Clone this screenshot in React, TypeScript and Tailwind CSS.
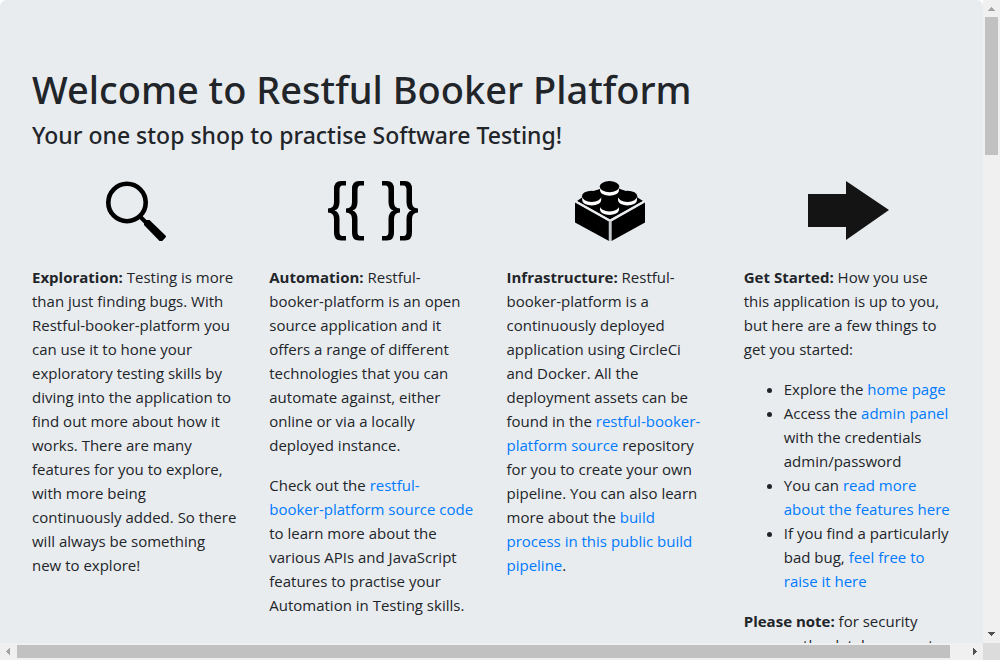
import type { ReactNode } from "react";

function MagnifierIcon() {
  return (
    <svg viewBox="0 0 60 60" className="h-[60px] w-[60px]" role="img" aria-label="Magnifying glass">
      <circle cx="21" cy="21.500" r="18.700" fill="none" stroke="#000" strokeWidth="4.600" />
      <path d="M33 34.500l7 7" stroke="#000" strokeWidth="4" fill="none" />
      <path d="M38 44V41.500L41 39H43.500L59.500 54.500Q60.500 55.500 59.500 56.500L56 60.300Q54.500 61 53.500 60Z" fill="#000" />
    </svg>
  );
}

const leftBrace =
  "M18 0H13Q6 0 6 8V21Q6 27.500 0 27.500V31.500Q6 31.500 6 38V52Q6 59.500 13 59.500H18V55H14.500Q11.500 55 11.500 51V38Q11.500 31 6.500 29.500Q11.500 28 11.500 21V9Q11.500 4.500 14.500 4.500H18Z";

function BracesIcon() {
  return (
    <svg viewBox="0 0 90 60" className="h-[60px] w-[90px]" role="img" aria-label="Double curly braces">
      <path d={leftBrace} />
      <path d={leftBrace} transform="translate(18 0)" />
      <path d={leftBrace} transform="translate(72 0) scale(-1 1)" />
      <path d={leftBrace} transform="translate(90 0) scale(-1 1)" />
    </svg>
  );
}

function Stud({ x, y }: { x: number; y: number }) {
  return (
    <g transform={`translate(${x} ${y})`}>
      <path d="M-9.500 0V3.500C-9.500 11 9.500 11 9.500 3.500V0Z" fill="#fff" />
      <ellipse cx="0" cy="0" rx="9.800" ry="5.600" />
    </g>
  );
}

function BrickIcon() {
  return (
    <svg viewBox="0 0 70 60" className="h-[60px] w-[70px]" role="img" aria-label="Building brick">
      <path d="M35 2L45 8L54 11L68 20L35 38.500L2 20L15 11L25 8Z" />
      <path d="M0 21.500L34 40.500V60L0 41.500Z" />
      <path d="M70 21.500L36.500 40.500V60L70 41.500Z" />
      <path d="M1 20.500L35 39.500L69 20.500" fill="none" stroke="#e9ecef" strokeWidth="2" />
      <path d="M35 39.500V60" stroke="#c6c9cc" strokeWidth="2.500" />
      <Stud x={34.500} y={5.600} />
      <Stud x={16.700} y={15.300} />
      <Stud x={52.500} y={15.300} />
      <Stud x={34.500} y={24.800} />
    </svg>
  );
}

function ArrowIcon() {
  return (
    <svg viewBox="-2 0 83 60" className="h-[60px] w-[83px]" role="img" aria-label="Arrow pointing right">
      <path d="M0 13H38V0L81 29L38 59V46H0Z" fill="#141414" />
    </svg>
  );
}

function Link({ children }: { children: ReactNode }) {
  return (
    <a href="#" className="text-[#007bff] hover:underline">
      {children}
    </a>
  );
}

function Column({ icon, children }: { icon: ReactNode; children: ReactNode }) {
  return (
    <section className="flex flex-col gap-4 px-[15px]">
      <div className="mb-2 flex h-[60px] justify-center">{icon}</div>
      {children}
    </section>
  );
}

function Caret({ points, color }: { points: string; color: string }) {
  return (
    <svg viewBox="0 0 17 17" className="h-[17px] w-[17px] shrink-0" shapeRendering="crispEdges">
      <polygon points={points} fill={color} />
    </svg>
  );
}

export default function App() {
  return (
    <div className="grid h-screen grid-cols-[minmax(0,1fr)_17px] grid-rows-[minmax(0,1fr)_17px] bg-white font-['Open_Sans','Noto_Sans',sans-serif] text-[15px] leading-6 text-[#212529]">
      <main className="overflow-hidden">
        <div className="rounded-md bg-[#e9ecef] px-8 py-16">
          <h1 className="mb-2 font-['Noto_Sans',sans-serif] text-[38px] leading-[50px] font-medium">
            Welcome to Restful Booker Platform
          </h1>
          <h2 className="mb-8 font-['Noto_Sans',sans-serif] text-[23px] leading-[27px] font-medium">
            Your one stop shop to practise Software Testing!
          </h2>
          <div className="-mx-[15px] grid grid-cols-4">
            <Column icon={<MagnifierIcon />}>
              <p>
                <strong>Exploration:</strong> Testing is more than just finding bugs. With Restful-booker-platform you can
                use it to hone your exploratory testing skills by diving into the application to find out more about how it
                works. There are many features for you to explore, with more being continuously added. So there will always
                be something
                <br /> new to explore!
              </p>
            </Column>
            <Column icon={<BracesIcon />}>
              <p>
                <strong>Automation:</strong> Restful-
                <br />
                booker-platform is an open source application and it offers a range of different technologies that you can
                automate against, either online or via a locally deployed instance.
              </p>
              <p>
                Check out the{" "}
                <Link>
                  restful-
                  <br />
                  booker-platform source code
                </Link>{" "}
                to learn more about the various APIs and JavaScript features to practise your Automation in Testing skills.
              </p>
            </Column>
            <Column icon={<BrickIcon />}>
              <p>
                <strong>Infrastructure:</strong> Restful-booker-platform is a continuously deployed application using
                CircleCi
                <br /> and Docker. All the deployment assets can be found in the{" "}
                <Link>restful-booker-platform source</Link> repository for you to create your own pipeline. You can also
                learn more about the{" "}
                <Link>
                  build
                  <br /> process in this public build pipeline
                </Link>
                .
              </p>
            </Column>
            <Column icon={<ArrowIcon />}>
              <p>
                <strong>Get Started:</strong> How you use this application is up to you, but here are a few things to get
                you started:
              </p>
              <ul className="list-disc pl-10">
                <li>
                  Explore the <Link>home page</Link>
                </li>
                <li>
                  Access the <Link>admin panel</Link> with the credentials admin/password
                </li>
                <li>
                  You can <Link>read more about the features here</Link>
                </li>
                <li>
                  If you find a particularly bad bug, <Link>feel free to raise it here</Link>
                </li>
              </ul>
              <p>
                <strong>Please note:</strong> for security reasons the database resets
              </p>
            </Column>
          </div>
        </div>
      </main>
      <div aria-hidden="true" className="flex flex-col items-center bg-[#f0f0f0]">
        <Caret points="5,11 8,7 9,7 12,11" color="#a3a3a3" />
        <div className="h-[138px] w-[13px] bg-[#c1c1c1]" />
        <div className="grow" />
        <Caret points="5,6 12,6 9,10 8,10" color="#505050" />
      </div>
      <div aria-hidden="true" className="flex items-center bg-[#f0f0f0]">
        <Caret points="10,5 10,12 6,9 6,8" color="#a3a3a3" />
        <div className="h-[13px] grow bg-[#c1c1c1]" />
        <div className="w-4" />
        <Caret points="7,5 11,8 11,9 7,12" color="#505050" />
      </div>
      <div aria-hidden="true" className="bg-[#dcdcdc]" />
    </div>
  );
}
